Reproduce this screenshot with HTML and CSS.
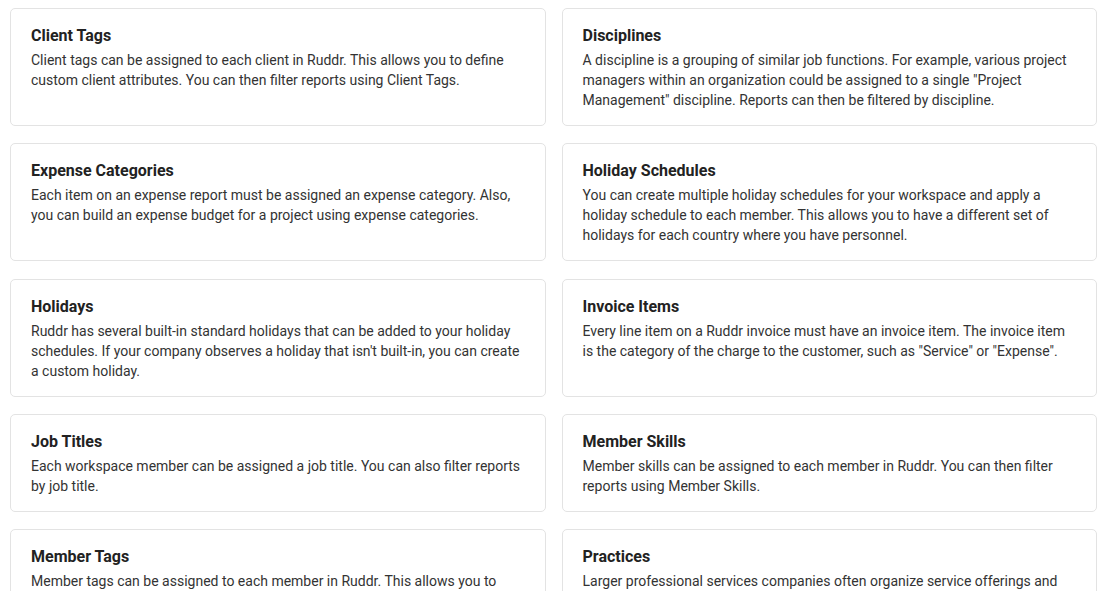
FILE: index.html
```html
<!DOCTYPE html>
<html lang="en">
<head>
  <meta charset="UTF-8" />
  <meta name="viewport" content="width=device-width, initial-scale=1.0"/>
  <title>Custom Data - Ruddr</title>
  <link rel="stylesheet" href="styles.css">
</head>
<body>

  <div class="card-grid">
    <div class="card">
      <h3>Client Tags</h3>
      <p>Client tags can be assigned to each client in Ruddr. This allows you to define custom client attributes. You can then filter reports using Client Tags.</p>
    </div>
    <div class="card">
      <h3>Disciplines</h3>
      <p>A discipline is a grouping of similar job functions. For example, various project managers within an organization could be assigned to a single "Project Management" discipline. Reports can then be filtered by discipline.</p>
    </div>

    <div class="card">
      <h3>Expense Categories</h3>
      <p>Each item on an expense report must be assigned an expense category. Also, you can build an expense budget for a project using expense categories.</p>
    </div>
    <div class="card">
      <h3>Holiday Schedules</h3>
      <p>You can create multiple holiday schedules for your workspace and apply a holiday schedule to each member. This allows you to have a different set of holidays for each country where you have personnel.</p>
    </div>

    <div class="card">
      <h3>Holidays</h3>
      <p>Ruddr has several built-in standard holidays that can be added to your holiday schedules. If your company observes a holiday that isn't built-in, you can create a custom holiday.</p>
    </div>
    <div class="card">
      <h3>Invoice Items</h3>
      <p>Every line item on a Ruddr invoice must have an invoice item. The invoice item is the category of the charge to the customer, such as "Service" or "Expense".</p>
    </div>

    <div class="card">
      <h3>Job Titles</h3>
      <p>Each workspace member can be assigned a job title. You can also filter reports by job title.</p>
    </div>
    <div class="card">
      <h3>Member Skills</h3>
      <p>Member skills can be assigned to each member in Ruddr. You can then filter reports using Member Skills.</p>
    </div>

    <div class="card">
      <h3>Member Tags</h3>
      <p>Member tags can be assigned to each member in Ruddr. This allows you to define custom member attributes. You can then filter reports using Member Tags.</p>
    </div>
    <div class="card">
      <h3>Practices</h3>
      <p>Larger professional services companies often organize service offerings and personnel into practices. Members and projects can be assigned to a practice.</p>
    </div>
  </div>

</body>
</html>
```

FILE: styles.css
```css
html {
  overflow: hidden;
}

body {
  font-family: Roboto, 'Liberation Sans', Arial, sans-serif;
  background: #ffffff;
  margin: 0;
  padding: 0;
  color: #333;
}

.card-grid {
  display: grid;
  grid-template-columns: 1fr 1fr;
  gap: 17.3px 16px;
  padding: 8px 9px 8px 10px;
}

.card {
  border: 1px solid #e3e3e3;
  border-radius: 5px;
  padding: 15px 18px 15px 20px;
  background: #fff;
}

.card h3 {
  font-size: 16px;
  line-height: 24px;
  font-weight: 700;
  color: #222;
  margin: 0 0 2px;
}

.card p {
  font-size: 14px;
  line-height: 20px;
  margin: 0;
  color: #333;
}
```
